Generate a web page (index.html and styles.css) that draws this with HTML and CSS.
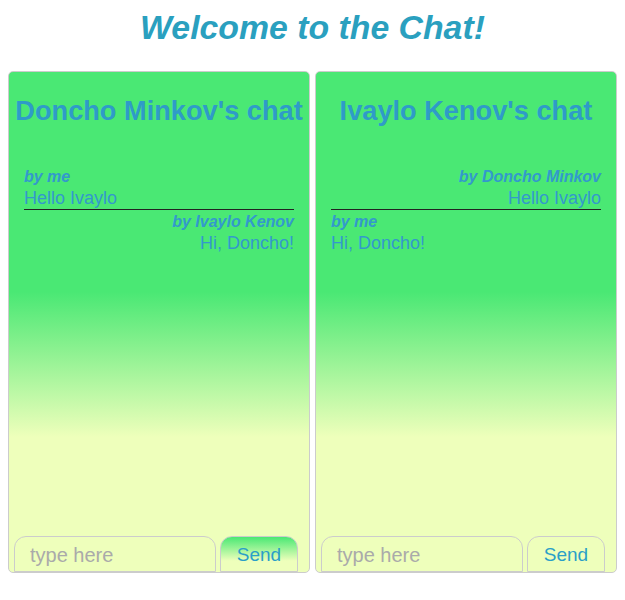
FILE: index.html
```html
<!DOCTYPE html>
<html>
<head>
<meta charset="utf-8">
<title>Chat</title>
<link rel="stylesheet" href="styles.css">
</head>
<body>
<h1 class="title">Welcome to the Chat!</h1>
<div class="chats">
  <section class="chat">
    <h2 class="chat-title">Doncho Minkov's chat</h2>
    <ul class="messages">
      <li class="message">
        <p class="author">by me</p>
        <p class="text">Hello Ivaylo</p>
      </li>
      <li class="message other">
        <p class="author">by Ivaylo Kenov</p>
        <p class="text">Hi, Doncho!</p>
      </li>
    </ul>
    <form class="composer">
      <input class="field" type="text" placeholder="type here">
      <button class="send active" type="button">Send</button>
    </form>
  </section>
  <section class="chat">
    <h2 class="chat-title">Ivaylo Kenov's chat</h2>
    <ul class="messages">
      <li class="message other">
        <p class="author">by Doncho Minkov</p>
        <p class="text">Hello Ivaylo</p>
      </li>
      <li class="message">
        <p class="author">by me</p>
        <p class="text">Hi, Doncho!</p>
      </li>
    </ul>
    <form class="composer">
      <input class="field" type="text" placeholder="type here">
      <button class="send" type="button">Send</button>
    </form>
  </section>
</div>
</body>
</html>
```
FILE: styles.css
```css
body {
  margin: 8px;
  font-family: "Liberation Sans", Arial, sans-serif;
  background: #fff;
}

.title {
  margin: 0 0 24px;
  text-align: center;
  font-size: 33.8px;
  font-weight: bold;
  font-style: italic;
  line-height: 39px;
  color: #2aa0bf;
}

.chats {
  display: flex;
  gap: 5px;
}

.chat {
  flex: 1;
  height: 502px;
  box-sizing: border-box;
  border: 1px solid #cccccc;
  border-radius: 5px;
  overflow: hidden;
  display: flex;
  flex-direction: column;
  background: linear-gradient(to bottom, #4ae874 0%, #4ae874 44%, #eeffbb 73%, #eeffbb 100%);
}

.chat-title {
  margin: 23px 0 0;
  text-align: center;
  font-size: 27.2px;
  line-height: 31px;
  font-weight: bold;
  color: #2f9bc8;
}

.messages {
  list-style: none;
  margin: 39px 15px 0;
  padding: 0;
  flex: 1;
  color: #3399cc;
}

.message {
  padding-top: 2px;
  border-bottom: 1px solid #222;
}

.message:last-child {
  border-bottom: none;
}

.message.other {
  text-align: right;
}

.author {
  margin: 0;
  font-size: 16px;
  line-height: 20px;
  font-weight: bold;
  font-style: italic;
}

.text {
  margin: 0;
  font-size: 18px;
  line-height: 22px;
}

.composer {
  display: flex;
  gap: 4px;
  margin: 0 11px 0 5px;
}

.field {
  flex: 1;
  min-width: 0;
  height: 36px;
  box-sizing: border-box;
  margin: 0;
  padding: 2px 15px 0;
  border: 1px solid #cccccc;
  border-radius: 12px 12px 0 0;
  background: transparent;
  font-family: "Liberation Sans", Arial, sans-serif;
  font-size: 20px;
  color: #666;
  outline: none;
}

.field::placeholder {
  color: #aaaaaa;
}

.send {
  width: 78px;
  height: 36px;
  box-sizing: border-box;
  margin: 0;
  padding: 2px 0 0;
  border: 1px solid #cccccc;
  border-radius: 12px 12px 0 0;
  background: transparent;
  font-family: "Liberation Sans", Arial, sans-serif;
  font-size: 19px;
  color: #2a9fc8;
}

.send.active {
  background: linear-gradient(to bottom, #4ae874 0%, #eeffbb 70%, #eeffbb 100%);
}
```
